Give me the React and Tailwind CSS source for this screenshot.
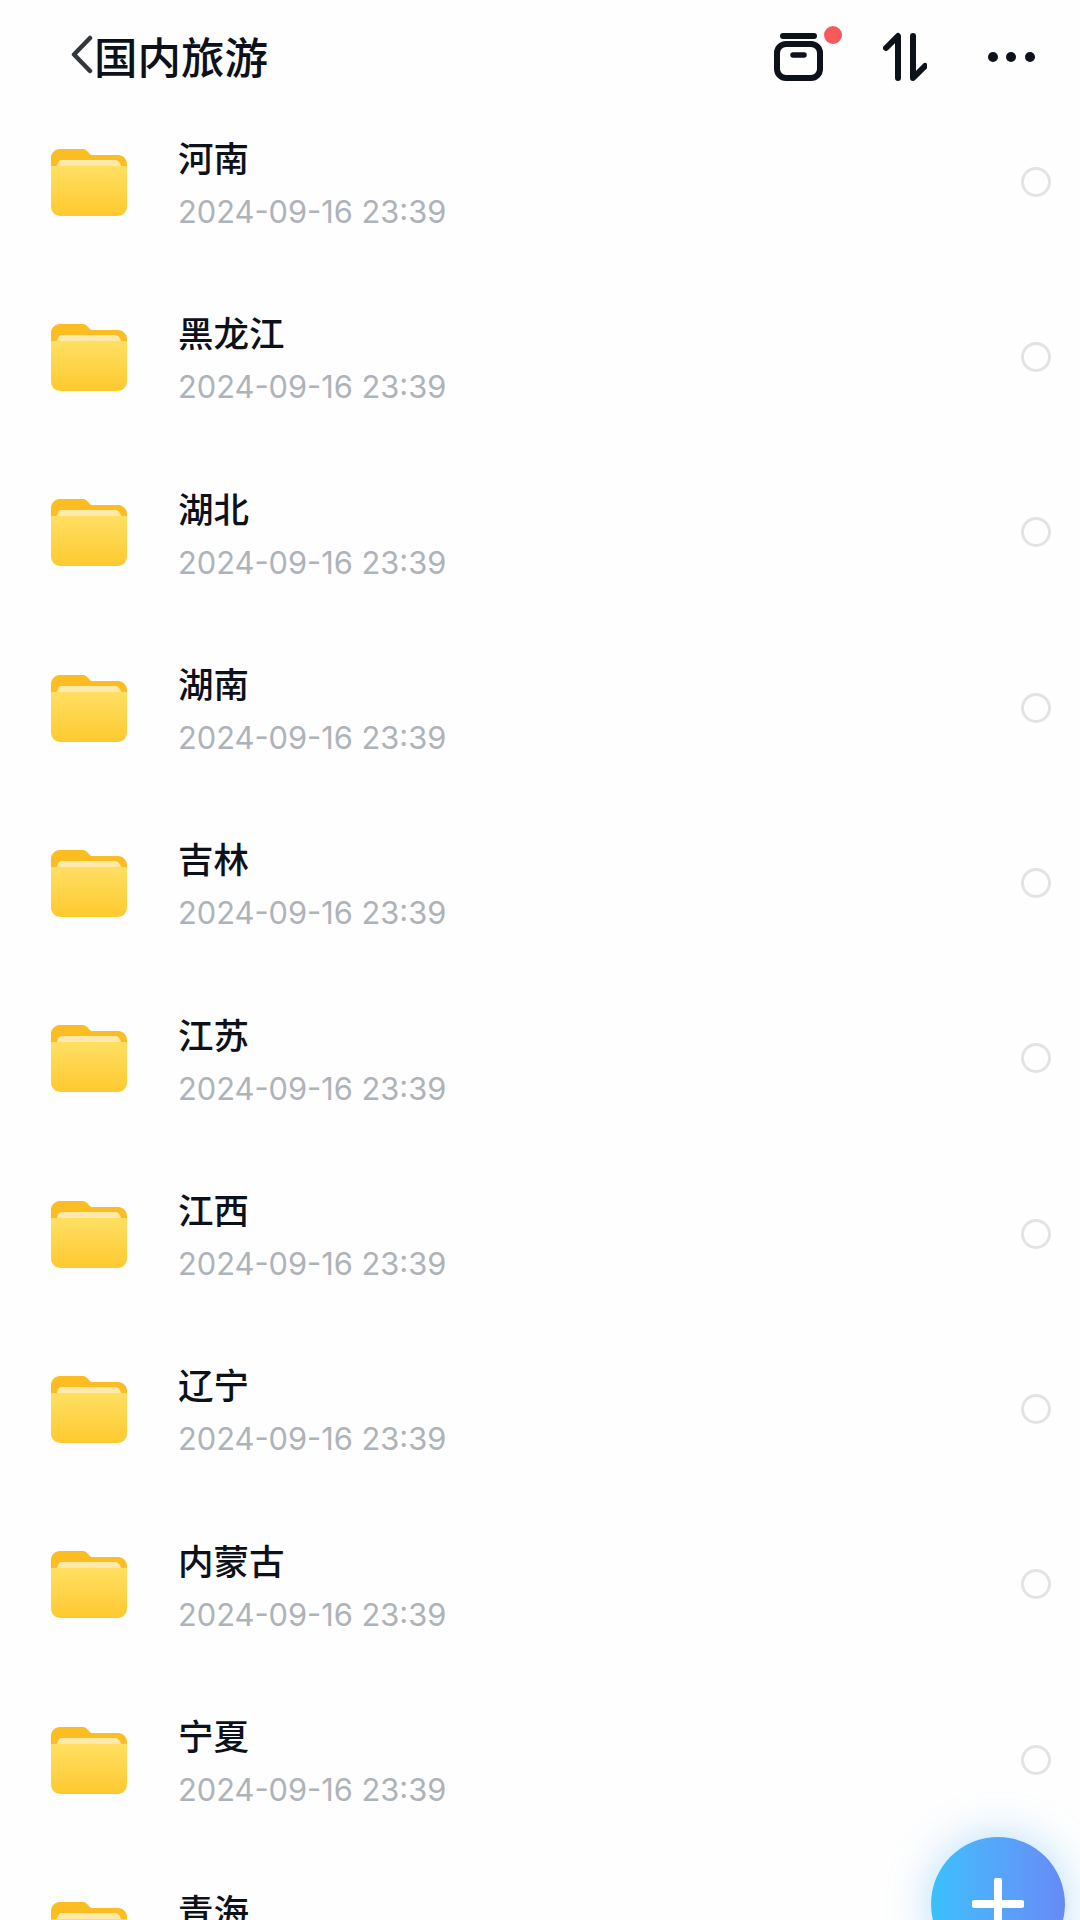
import { useId } from 'react'

const provinces = ['河南', '黑龙江', '湖北', '湖南', '吉林', '江苏', '江西', '辽宁', '内蒙古', '宁夏', '青海']

function FolderIcon() {
  const id = useId()
  return (
    <svg width="76" height="68" viewBox="0 0 76 68" className="mt-[2px] shrink-0">
      <defs>
        <linearGradient id={id} x1="0" y1="0" x2="0" y2="1">
          <stop offset="0" stopColor="#ffdf62" />
          <stop offset="1" stopColor="#fec92f" />
        </linearGradient>
      </defs>
      <path d="M9 0H31C35 0 36 2 38 4C39 5.500 40 6 42 6H67C72 6 76 10 76 15V30H0V9C0 4 4 0 9 0Z" fill="#fcbd22" />
      <path d="M11 11H64C67 11 69 13 70 17V24H6V17C7 13 8 11 11 11Z" fill="#fee9ab" />
      <path d="M0 18C0 17 1 17 2 17H74C75 17 76 17 76 18V57C76 63 72 67 66 67H10C4 67 0 63 0 57Z" fill={`url(#${id})`} />
    </svg>
  )
}

function Row({ name }) {
  return (
    <div className="flex h-[175.33px] shrink-0 items-center pl-[51px] pr-[29px]">
      <FolderIcon />
      <div className="ml-[51px] flex-1 pt-[4px]">
        <p className="text-[35.500px] leading-[48px] font-medium text-[#0d1119]">{name}</p>
        <p className="mt-[9px] font-['Inter',sans-serif] text-[30.800px] leading-[44px] text-[#aeb3ba]">2024-09-16 23:39</p>
      </div>
      <div className="h-[30px] w-[30px] rounded-full border-[3px] border-[#e2e3e4]" />
    </div>
  )
}

export default function App() {
  return (
    <div className="relative h-[1920px] w-[1080px] overflow-hidden bg-[#fefefe] font-['Noto_Sans_CJK_SC','Noto_Sans',sans-serif]">
      {/* Top bar */}
      <div className="flex h-[94px] items-start pt-[30px] pl-[70px] pr-[45px]">
        <svg width="24" height="40" viewBox="0 0 24 40" className="mt-[5px]">
          <path d="M20 3L4 19.500L20 36" fill="none" stroke="#33363b" strokeWidth="4.500" strokeLinecap="round" strokeLinejoin="round" />
        </svg>
        <h1 className="text-[43.500px] leading-[52px] font-medium text-[#0d1119]">国内旅游</h1>
        <div className="ml-auto flex items-start">
          <svg width="72" height="60" viewBox="0 0 72 60" className="-mt-[6px]">
            <path d="M12 12H43" stroke="#0d1119" strokeWidth="6" strokeLinecap="round" />
            <rect x="6" y="20" width="43" height="34" rx="9" fill="none" stroke="#0d1119" strokeWidth="6" />
            <path d="M22 31H33" stroke="#0d1119" strokeWidth="5.500" strokeLinecap="round" />
            <circle cx="62" cy="11" r="9" fill="#f65b5b" />
          </svg>
          <svg width="44" height="54" viewBox="0 0 44 54" className="ml-[40px]">
            <path d="M3 18L15 6V48" fill="none" stroke="#0d1119" strokeWidth="6" strokeLinecap="round" strokeLinejoin="round" />
            <path d="M30 6V48L42 36" fill="none" stroke="#0d1119" strokeWidth="6" strokeLinecap="round" strokeLinejoin="round" />
          </svg>
          <svg width="48" height="12" viewBox="0 0 48 12" className="mt-[21px] ml-[60px]">
            <circle cx="6" cy="6" r="5" fill="#0d1119" />
            <circle cx="24" cy="6" r="5" fill="#0d1119" />
            <circle cx="43" cy="6" r="5" fill="#0d1119" />
          </svg>
        </div>
      </div>

      {/* Folder list */}
      <div className="flex flex-col">
        {provinces.map((name) => (
          <Row key={name} name={name} />
        ))}
      </div>

      {/* Add button */}
      <div className="absolute top-[1837px] left-[931px] flex h-[134px] w-[134px] items-center justify-center rounded-full bg-gradient-to-r from-[#38c0fd] to-[#668af6] shadow-[0_0_44px_rgba(70,170,250,0.4)]">
        <svg width="52" height="52" viewBox="0 0 52 52">
          <path d="M26 3V49M3 26H49" stroke="#fff" strokeWidth="8" strokeLinecap="round" />
        </svg>
      </div>
    </div>
  )
}
